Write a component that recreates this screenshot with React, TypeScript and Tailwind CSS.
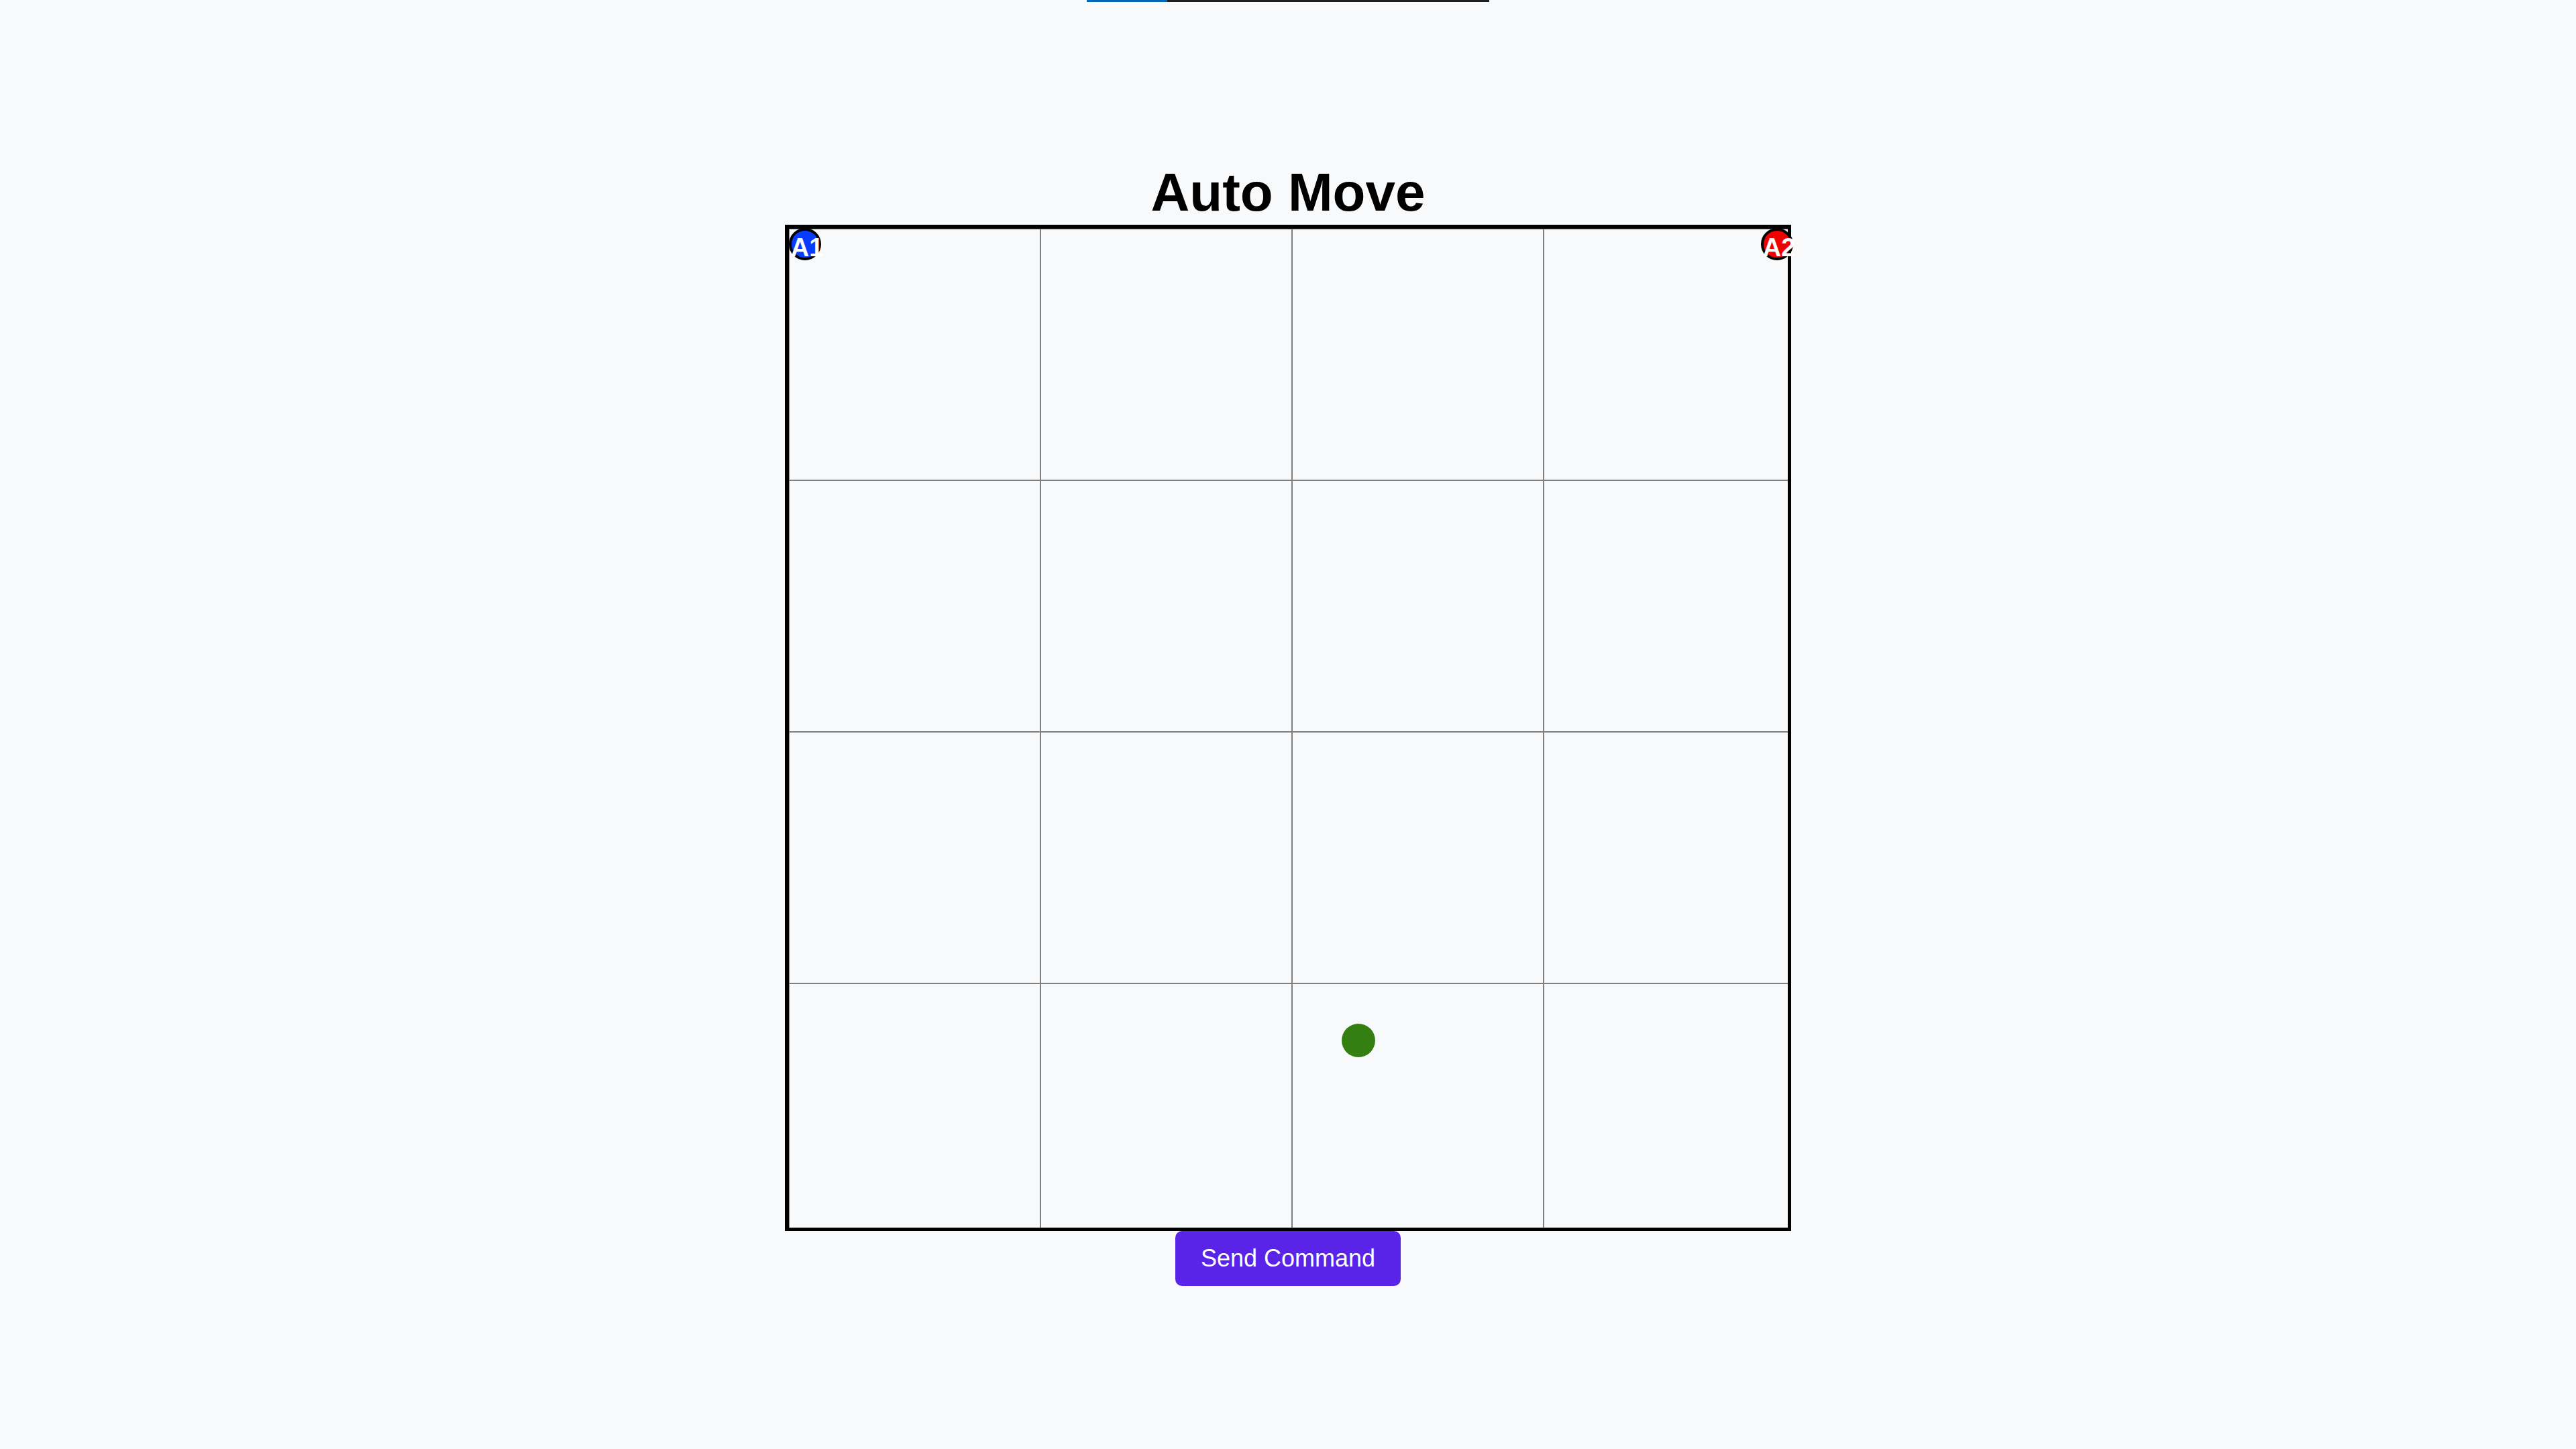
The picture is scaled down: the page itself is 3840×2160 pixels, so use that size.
import React from "react";

const cells = Array.from({ length: 16 }, (_, i) => i);

function Agent({ label, color, pos }: { label: string; color: string; pos: string }) {
  return (
    <div
      className={`absolute ${pos} w-[48px] h-[48px] rounded-full border-[4px] border-black ${color} flex items-center justify-center pl-[6px] pt-[10px]`}
    >
      <span className="text-white font-bold text-[38px] leading-none whitespace-nowrap">{label}</span>
    </div>
  );
}

export default function App() {
  return (
    <div
      className="min-h-screen w-full bg-[#f8f9fa] flex flex-col items-center"
      style={{ fontFamily: '"Liberation Sans", Arial, sans-serif' }}
    >
      <div className="w-[600px] h-[3px] bg-[#1f1f1f] flex">
        <div className="w-[120px] h-full bg-[#0067b8]" />
      </div>
      <h1 className="mt-[238px] text-[80px] leading-[92px] font-bold text-black">Auto Move</h1>
      <div className="mt-[2px] relative w-[1500px] h-[1500px]">
        <div className="w-full h-full border-l-[6px] border-t-[6px] border-r-[5px] border-b-[5px] border-black overflow-hidden">
          <div className="grid grid-cols-[repeat(4,375px)] grid-rows-[repeat(4,375px)]">
            {cells.map((c) => (
              <div key={c} className="border border-[#808080]" />
            ))}
          </div>
        </div>
        <Agent label="A1" color="bg-[#0a3cff]" pos="left-[6px] top-[5px]" />
        <Agent label="A2" color="bg-[#f00000]" pos="left-[1455px] top-[5px]" />
        <div className="absolute left-[830px] top-[1191px] w-[50px] h-[50px] rounded-full bg-[#337f12]" />
      </div>
      <button className="w-[336px] h-[82px] rounded-[10px] bg-[#5924e8] text-white text-[36px] leading-none">
        Send Command
      </button>
    </div>
  );
}
